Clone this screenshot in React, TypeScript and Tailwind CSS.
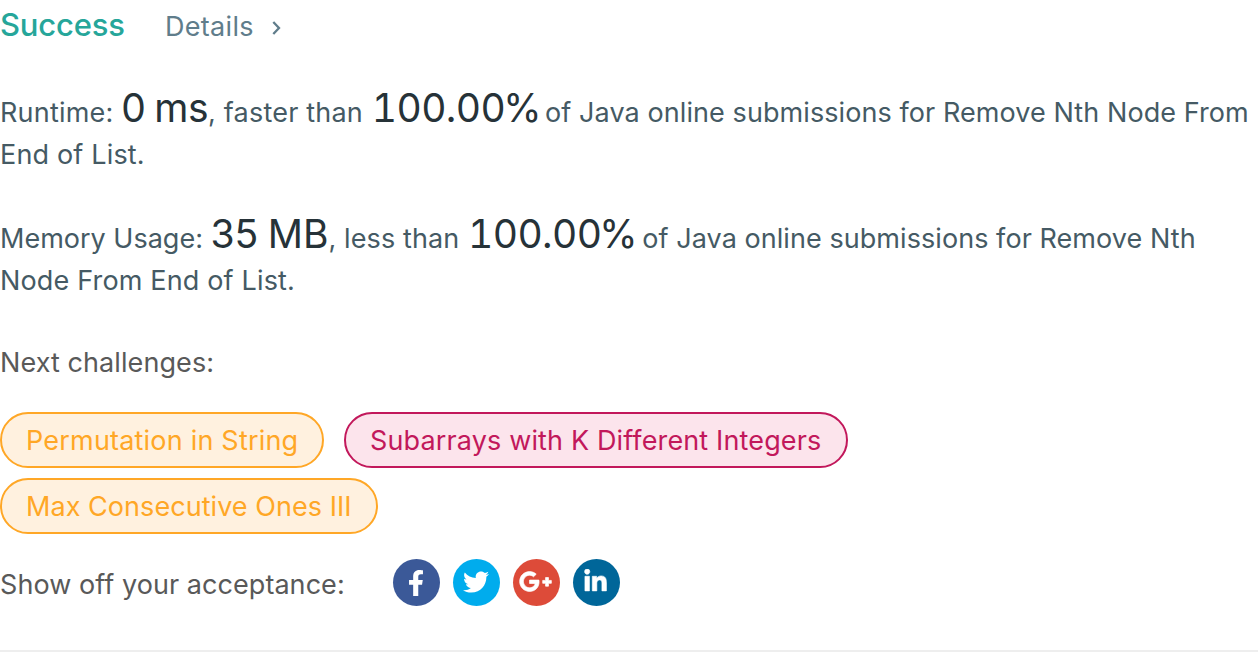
import { FaFacebookF, FaTwitter, FaGooglePlusG, FaLinkedinIn } from "react-icons/fa";

function FullScore() {
  return (
    <span className="ml-px text-[39px] leading-[0] tabular-nums text-[#263238]">
      <span className="tracking-[-0.6px]">100.00</span>
      <span className="-ml-[2px]">%</span>
    </span>
  );
}

export default function App() {
  return (
    <main className="flex h-[652px] w-[1258px] flex-col overflow-hidden border-b-2 border-[#eeeeee] bg-white font-['Inter',sans-serif] text-[27px] whitespace-nowrap">
      <header className="flex h-[50px] items-baseline leading-[50px]">
        <h1 className="w-[165px] text-[31px] font-medium tracking-[-0.2px] text-[#26a69a]">Success</h1>
        <a className="flex items-baseline text-[#607d8b]">
          <span className="w-[106.5px] tracking-[0.3px]">Details</span>
          <svg className="mt-[19px] self-start" width="9" height="14" viewBox="0 0 9 14" fill="none" stroke="currentColor" strokeWidth="2.3">
            <path d="M1.3 1 7 7l-5.700 6" />
          </svg>
        </a>
      </header>

      <p className="mt-[42px] h-[84px] leading-[42px] text-[#455a64]">
        <span className="tracking-[0.2px]">Runtime: </span>
        <span className="text-[39px] leading-[0] tracking-[-0.5px] [word-spacing:-1.5px] text-[#263238]">0 ms</span>
        <span className="tracking-[0.2px]">, faster than </span>
        <FullScore />
        <span className="-ml-[4px] tracking-[0.08px]"> of Java online submissions for Remove Nth Node From</span>
        <br />
        <span className="tracking-[0.17px]">End of List.</span>
      </p>

      <p className="mt-[42px] h-[84px] leading-[42px] text-[#455a64]">
        <span>Memory Usage: </span>
        <span className="text-[39px] leading-[0] [word-spacing:-1.5px] text-[#263238]">35 MB</span>
        <span className="tracking-[0.1px]">, less than </span>
        <FullScore />
        <span className="-ml-[3px] tracking-[0.06px]"> of Java online submissions for Remove Nth</span>
        <br />
        <span className="tracking-[0.16px]">Node From End of List.</span>
      </p>

      <h2 className="mt-[40px] leading-[42px] tracking-[0.08px] text-[#595959]">Next challenges:</h2>

      <div className="mt-[28px] flex flex-wrap gap-x-5 gap-y-[10px] leading-[54px]">
        <a className="h-14 w-[324px] rounded-full border-2 border-[#ffa726] bg-[#fff1df] pl-6 tracking-[0.2px] text-[#ffa726]">Permutation in String</a>
        <a className="mr-40 h-14 w-[504px] rounded-full border-2 border-[#c2185b] bg-[#fce4ec] pl-6 tracking-[0.14px] text-[#c2185b]">Subarrays with K Different Integers</a>
        <a className="h-14 w-[378px] rounded-full border-2 border-[#ffa726] bg-[#fff1df] pl-6 tracking-[0.05px] text-[#ffa726]">Max Consecutive Ones III</a>
      </div>

      <footer className="mt-[24px] flex h-12 items-center text-[#595959]">
        <span className="w-[392.5px] pt-[7px] tracking-[0.06px]">Show off your acceptance:</span>
        <div className="flex gap-[13px] text-white">
          <a className="flex size-[47px] items-center justify-center rounded-full bg-[#3b5998]"><FaFacebookF className="mt-px -ml-px" size={26} /></a>
          <a className="flex size-[47px] items-center justify-center rounded-full bg-[#00aced]"><FaTwitter size={26} /></a>
          <a className="flex size-[47px] items-center justify-center rounded-full bg-[#dd4b39]"><FaGooglePlusG className="-mt-px -ml-px" size={33} stroke="white" strokeWidth={14} /></a>
          <a className="flex size-[47px] items-center justify-center rounded-full bg-[#006699]"><FaLinkedinIn className="-mt-[2px] -ml-px" size={25} stroke="white" strokeWidth={12} /></a>
        </div>
      </footer>
    </main>
  );
}
